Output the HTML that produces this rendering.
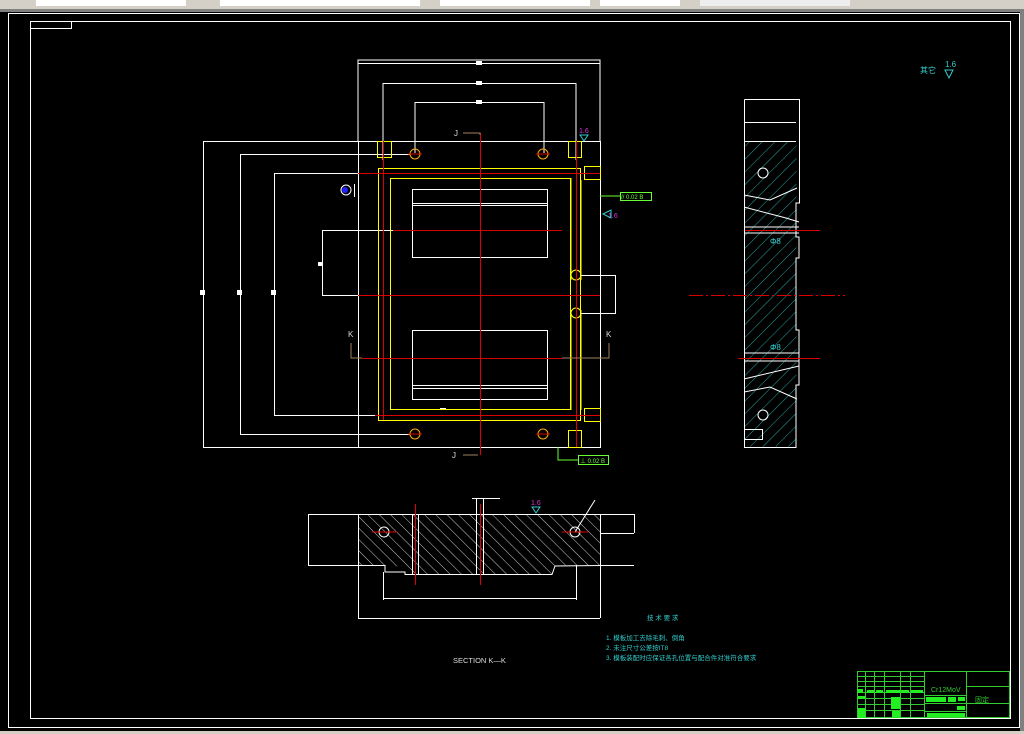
<!DOCTYPE html>
<html><head><meta charset="utf-8"><style>
html,body{margin:0;padding:0;background:#000;width:1024px;height:734px;overflow:hidden}
svg{display:block}
text{font-family:"Liberation Sans","Noto Sans CJK SC",sans-serif}
</style></head><body>
<svg width="1024" height="734" viewBox="0 0 1024 734" xmlns="http://www.w3.org/2000/svg">
<defs>
<pattern id="hc" width="9" height="9" patternUnits="userSpaceOnUse" patternTransform="rotate(45)"><line x1="0" y1="0" x2="0" y2="9" stroke="#3cc" stroke-width="0.8"/></pattern>
<pattern id="hw" width="8" height="8" patternUnits="userSpaceOnUse" patternTransform="rotate(-45)"><line x1="0" y1="0" x2="0" y2="8" stroke="#fff" stroke-width="0.8"/></pattern>
</defs>
<rect width="1024" height="734" fill="#000"/>
<!-- toolbar -->
<rect x="0" y="0" width="1024" height="9" fill="#d4d0c8"/>
<rect x="36" y="0" width="150" height="6" fill="#fff"/><rect x="220" y="0" width="200" height="6" fill="#fff"/>
<rect x="440" y="0" width="150" height="6" fill="#fff"/><rect x="600" y="0" width="80" height="6" fill="#fff"/><rect x="700" y="0" width="150" height="6" fill="#eee"/>
<rect x="0" y="9" width="1024" height="3" fill="#808080"/>
<rect x="0" y="731" width="1024" height="3" fill="#d4d0c8"/>
<rect x="1020" y="12" width="4" height="719" fill="#808080"/>
<g fill="none" stroke="#fff" stroke-width="1">
<rect x="8.5" y="13.5" width="1011" height="714"/>
<rect x="30.5" y="21.5" width="980" height="697"/>
<rect x="30.5" y="21.5" width="41" height="7"/>
<!-- main plate -->
<rect x="358.5" y="141.5" width="242" height="306"/>
<polyline points="358,141 358,60 600,60 600,141"/>
<line x1="358" y1="63.5" x2="600" y2="63.5"/>
<polyline points="383,160 383,83.5 576,83.5 576,160"/>
<polyline points="415,153 415,102.5 544,102.5 544,153"/>
<rect x="412.5" y="189.5" width="135" height="68"/>
<line x1="412" y1="203.5" x2="547" y2="203.5"/><line x1="412" y1="205.5" x2="547" y2="205.5"/>
<rect x="412.5" y="330.5" width="135" height="69"/>
<line x1="412" y1="385.5" x2="547" y2="385.5"/><line x1="412" y1="388.5" x2="547" y2="388.5"/>
<line x1="440" y1="408.5" x2="446" y2="408.5"/>
<!-- left dims -->
<line x1="203.5" y1="141" x2="203.5" y2="447"/><line x1="203" y1="141.5" x2="358" y2="141.5"/><line x1="203" y1="447.5" x2="358" y2="447.5"/>
<line x1="240.5" y1="154" x2="240.5" y2="434"/><line x1="240" y1="154.5" x2="410" y2="154.5"/><line x1="240" y1="434.5" x2="410" y2="434.5"/>
<line x1="274.5" y1="173" x2="274.5" y2="415"/><line x1="274" y1="173.5" x2="378" y2="173.5"/><line x1="274" y1="415.5" x2="378" y2="415.5"/>
<line x1="322.5" y1="230" x2="322.5" y2="295"/><line x1="322" y1="230.5" x2="393" y2="230.5"/><line x1="322" y1="295.5" x2="380" y2="295.5"/>
<line x1="580" y1="275.5" x2="616" y2="275.5"/><line x1="580" y1="313.5" x2="616" y2="313.5"/><line x1="615.5" y1="275" x2="615.5" y2="313"/>
<circle cx="346" cy="190" r="5"/><line x1="354.5" y1="184" x2="354.5" y2="197"/>
</g>
<circle cx="345" cy="190" r="3" fill="#22f"/>
<g fill="#fff" font-size="5">
<rect x="200" y="290" width="5" height="5"/><rect x="237" y="290" width="5" height="5"/><rect x="271" y="290" width="5" height="5"/><rect x="318" y="262" width="4" height="4"/>
<rect x="476" y="61" width="6" height="4"/><rect x="476" y="81" width="6" height="4"/><rect x="476" y="100" width="6" height="4"/>
</g>
<!-- yellow channels -->
<g fill="none" stroke="#ff0" stroke-width="1">
<rect x="378.5" y="168.5" width="202" height="252"/>
<rect x="390.5" y="178.5" width="180" height="231"/>
<line x1="571" y1="178" x2="571" y2="280"/><line x1="581" y1="180" x2="581" y2="280"/>
<line x1="571" y1="310" x2="571" y2="410"/><line x1="581" y1="310" x2="581" y2="410"/>
<circle cx="576" cy="275" r="5"/><circle cx="576" cy="313" r="5"/>
<rect x="377.5" y="141.5" width="14" height="16"/><rect x="568.5" y="141.5" width="13" height="16"/>
<rect x="584.5" y="166.5" width="16" height="13"/><rect x="584.5" y="408.5" width="16" height="13"/>
<rect x="568.5" y="430.5" width="13" height="17"/>
<circle cx="415" cy="154" r="5" stroke="#fa0"/><circle cx="543" cy="154" r="5" stroke="#fa0"/>
<circle cx="415" cy="434" r="5" stroke="#fa0"/><circle cx="543" cy="434" r="5" stroke="#fa0"/>
</g>
<g stroke="#d00" stroke-width="1">
<line x1="480.5" y1="133" x2="480.5" y2="455"/>
<line x1="358" y1="173.5" x2="600" y2="173.5"/><line x1="375" y1="415.5" x2="600" y2="415.5"/>
<line x1="383.5" y1="141" x2="383.5" y2="420"/><line x1="576.5" y1="141" x2="576.5" y2="447"/>
<line x1="393" y1="230.5" x2="562" y2="230.5"/><line x1="358" y1="295.5" x2="600" y2="295.5"/><line x1="362" y1="358.5" x2="562" y2="358.5"/>
<line x1="408" y1="154" x2="422" y2="154"/><line x1="536" y1="154" x2="550" y2="154"/><line x1="408" y1="434" x2="422" y2="434"/><line x1="536" y1="434" x2="550" y2="434"/>
</g>
<g stroke="#a08060" fill="none">
<polyline points="463,133 480,133 480,135"/><polyline points="463,455 478,455"/>
<polyline points="351,343 351,358 362,358"/><polyline points="609,343 609,358 562,358"/>
</g>
<g fill="#ddd" font-size="8"><text x="454" y="136">J</text><text x="452" y="458">J</text><text x="348" y="337">K</text><text x="606" y="337">K</text></g>
<!-- annotations -->
<g fill="none" stroke="#6f3" stroke-width="1">
<polyline points="600,196 620,196"/><rect x="620.5" y="192.5" width="31" height="8"/>
<polyline points="558,447 558,460 578,460"/><rect x="578.5" y="455.5" width="30" height="9"/>
</g>
<g fill="#6f3" font-size="6"><text x="621" y="199">// 0.02 B</text><text x="580" y="463">⊥ 0.02 B</text></g>
<text x="579" y="133" fill="#d3d" font-size="7">1.6</text>
<path d="M580 135 L588 135 L584 141 Z" fill="none" stroke="#3cc"/>
<text x="608" y="218" fill="#d3d" font-size="7">1.6</text>
<path d="M603 214 L611 210 L611 218 Z" fill="none" stroke="#3cc"/>
<text x="920" y="73" fill="#3cc" font-size="8">其它</text>
<text x="945" y="67" fill="#3cc" font-size="8">1.6</text>
<path d="M945 70 L953 70 L949 78 Z" fill="none" stroke="#3cc"/>
<!-- side view -->
<rect x="744.5" y="141.5" width="52" height="305" fill="url(#hc)"/>
<g fill="none" stroke="#fff" stroke-width="1">
<polyline points="744.5,99.5 799.5,99.5 799.5,203 796,203 796,237 799,237 799,258 796,258 796,330 799,330 799,385 796,385 796,447.5 744.5,447.5 744.5,99.5"/>
<line x1="744" y1="122.5" x2="796" y2="122.5"/><line x1="744" y1="141.5" x2="796" y2="141.5"/>
<polyline points="744,195 770,200 797,188"/><polyline points="744,207 786,218 799,222"/>
<line x1="744" y1="227" x2="799" y2="227"/><line x1="744" y1="233" x2="799" y2="233"/>
<line x1="744" y1="353" x2="799" y2="353"/><line x1="744" y1="361" x2="799" y2="361"/>
<polyline points="744,379 799,366"/><polyline points="744,392 770,387 797,399"/>
<circle cx="763" cy="173" r="5"/><circle cx="763" cy="415" r="5"/>
<rect x="744.5" y="429.5" width="18" height="10"/>
</g>
<g stroke="#d00"><line x1="745" y1="230.5" x2="820" y2="230.5"/><line x1="689" y1="295.5" x2="845" y2="295.5" stroke-dasharray="14 3 2 3"/><line x1="738" y1="358.5" x2="820" y2="358.5"/></g>
<text x="770" y="244" fill="#3cc" font-size="8">Φ8</text><text x="770" y="350" fill="#3cc" font-size="8">Φ8</text>
<!-- section -->
<path d="M358 514 L600 514 L600 565 L555 565 L552 574 L405 574 L405 567 L385 565 L358 565 Z" fill="url(#hw)"/>
<g fill="none" stroke="#fff" stroke-width="1">
<polyline points="308,514.5 634,514.5"/>
<polyline points="358.5,514 358.5,618"/><polyline points="600.5,514 600.5,618"/>
<polyline points="308,565.5 385,565.5 385,572 405,572 405,574.5 552,574.5 555,566 600,565.5 634,565.5"/>
<line x1="308.5" y1="514" x2="308.5" y2="565"/><line x1="634.5" y1="514" x2="634.5" y2="533"/><line x1="600" y1="533.5" x2="634" y2="533.5"/>
<line x1="383.5" y1="572" x2="383.5" y2="600"/><line x1="576.5" y1="565" x2="576.5" y2="600"/>
<line x1="383" y1="598.5" x2="576" y2="598.5"/><line x1="358" y1="618.5" x2="600" y2="618.5"/>
<line x1="412.5" y1="514" x2="412.5" y2="574"/><line x1="418.5" y1="514" x2="418.5" y2="574"/>
<line x1="476.5" y1="498" x2="476.5" y2="574"/><line x1="483.5" y1="498" x2="483.5" y2="574"/>
<line x1="472" y1="498.5" x2="500" y2="498.5"/>
<circle cx="384" cy="532" r="5"/><circle cx="575" cy="532" r="5"/>
<line x1="575" y1="532" x2="595" y2="500"/>
</g>
<g stroke="#d00"><line x1="415.5" y1="504" x2="415.5" y2="585"/><line x1="480.5" y1="504" x2="480.5" y2="585"/><line x1="372" y1="532" x2="397" y2="532"/><line x1="562" y1="532" x2="588" y2="532"/></g>
<text x="531" y="505" fill="#d3d" font-size="7">1.6</text>
<path d="M532 507 L540 507 L536 513 Z" fill="none" stroke="#3cc"/>
<text x="453" y="663" fill="#ddd" font-size="7.5">SECTION K—K</text>
<!-- notes -->
<g fill="#3cc" font-size="6.5">
<text x="647" y="620">技 术 要 求</text>
<text x="606" y="640">1. 模板加工去除毛刺、倒角</text>
<text x="606" y="650">2. 未注尺寸公差按IT8</text>
<text x="606" y="660">3. 模板装配时应保证各孔位置与配合件对准符合要求</text>
</g>
<!-- title block -->
<g fill="none" stroke="#3c3" stroke-width="1">
<rect x="857.5" y="671.5" width="152" height="46"/>
<line x1="924.5" y1="671" x2="924.5" y2="718"/><line x1="966.5" y1="671" x2="966.5" y2="718"/>
<line x1="966" y1="686.5" x2="1010" y2="686.5"/><line x1="966" y1="703.5" x2="1010" y2="703.5"/>
<line x1="857" y1="676.5" x2="924" y2="676.5"/><line x1="857" y1="681.5" x2="924" y2="681.5"/><line x1="857" y1="686.5" x2="924" y2="686.5"/>
<line x1="857" y1="692.5" x2="924" y2="692.5"/><line x1="857" y1="698.5" x2="924" y2="698.5"/><line x1="857" y1="704.5" x2="924" y2="704.5"/><line x1="857" y1="710.5" x2="924" y2="710.5"/>
<line x1="865.5" y1="671" x2="865.5" y2="718"/><line x1="874.5" y1="671" x2="874.5" y2="718"/><line x1="884.5" y1="671" x2="884.5" y2="718"/><line x1="900.5" y1="671" x2="900.5" y2="718"/><line x1="910.5" y1="671" x2="910.5" y2="718"/>
<line x1="924" y1="695.5" x2="966" y2="695.5"/><line x1="924" y1="703.5" x2="966" y2="703.5"/><line x1="924" y1="711.5" x2="966" y2="711.5"/>
</g>
<g fill="#2e2">
<rect x="857" y="689" width="6" height="4"/><rect x="867" y="690" width="7" height="3"/><rect x="876" y="690" width="7" height="3"/><rect x="886" y="690" width="14" height="3"/><rect x="901" y="690" width="8" height="3"/><rect x="911" y="690" width="12" height="3"/>
<rect x="858" y="696" width="7" height="3"/><rect x="891" y="697" width="9" height="12"/><rect x="858" y="708" width="7" height="10"/><rect x="892" y="711" width="8" height="6"/>
<rect x="926" y="697" width="20" height="5"/><rect x="948" y="697" width="8" height="5"/><rect x="958" y="697" width="7" height="4"/><rect x="957" y="706" width="8" height="4"/><rect x="927" y="713" width="38" height="4"/>
</g>
<text x="931" y="692" fill="#3c3" font-size="7">Cr12MoV</text>
<text x="975" y="702" fill="#3c3" font-size="7">固定</text>
</svg>
</body></html>
